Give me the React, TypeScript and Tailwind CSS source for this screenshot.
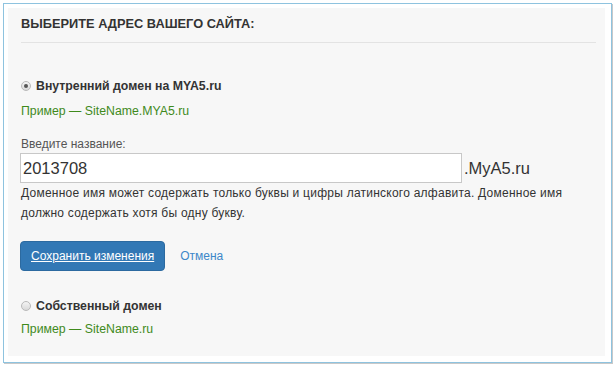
import React from 'react';

const Radio = ({ checked }: { checked?: boolean }) => (
    <span className="w-[10px] h-[10px] rounded-full border border-[#b9b9b9] bg-gradient-to-b from-[#f4f4f4] to-[#d9d9d9] flex items-center justify-center shrink-0">
        {checked && <span className="w-[4px] h-[4px] rounded-full bg-[#555]" />}
    </span>
);

export default function App() {
    return (
        <div className="w-[616px] h-[367px] bg-white pt-[3px] pl-[3px] font-['Liberation_Sans',Arial,sans-serif]">
            <div className="w-[609px] h-[360px] border border-[#8ec3df] pl-[4px] pr-[6px] pt-[4px] pb-[6px] shadow-[1px_1px_0_#c9c9c9]">
                <div className="h-full bg-[#f7f7f7] pl-[13px] pr-[9px] pt-[6px]">
                    {/* Заголовок */}
                    <div className="h-[20px] leading-[20px] text-[12.8px] font-bold text-[#333] pb-[8px] border-b border-[#e3e3e3] box-content">
                        ВЫБЕРИТЕ АДРЕС ВАШЕГО САЙТА:
                    </div>

                    {/* Внутренний домен */}
                    <div className="mt-[33px] flex items-center gap-[5px] h-[20px]">
                        <Radio checked />
                        <span className="text-[12.3px] font-bold text-[#333]">Внутренний домен на MYA5.ru</span>
                    </div>
                    <div className="mt-[5px] h-[20px] leading-[20px] text-[12.3px] text-[#3f8a1c]">
                        Пример — SiteName.MYA5.ru
                    </div>

                    <div className="mt-[14px] h-[18px] leading-[18px] text-[12px] text-[#555]">Введите название:</div>
                    <div className="flex items-center">
                        <input
                            className="w-[442px] h-[30px] ml-[-1px] border border-[#c8c8c8] bg-white px-[2px] text-[16.5px] text-[#333] outline-none"
                            defaultValue="2013708"
                        />
                        <span className="ml-[2px] text-[16.5px] text-[#333]">.MyA5.ru</span>
                    </div>
                    <p className="text-[12px] leading-[20px] tracking-[0.24px] text-[#333] w-[560px]">
                        Доменное имя может содержать только буквы и цифры латинского алфавита. Доменное имя должно содержать хотя бы одну букву.
                    </p>

                    <div className="mt-[18px] flex items-center">
                        <button className="ml-[-1px] h-[30px] px-[10px] rounded-[4px] bg-[#3278b5] border border-[#2c6aa0] text-white text-[12px] underline">
                            Сохранить изменения
                        </button>
                        <a href="#" className="ml-[15px] text-[12px] text-[#3d87c9]">Отмена</a>
                    </div>

                    {/* Собственный домен */}
                    <div className="mt-[25px] flex items-center gap-[5px] h-[20px]">
                        <Radio />
                        <span className="text-[12.3px] font-bold text-[#333]">Собственный домен</span>
                    </div>
                    <div className="mt-[3px] h-[20px] leading-[20px] text-[12.3px] text-[#3f8a1c]">
                        Пример — SiteName.ru
                    </div>
                </div>
            </div>
        </div>
    );
}
